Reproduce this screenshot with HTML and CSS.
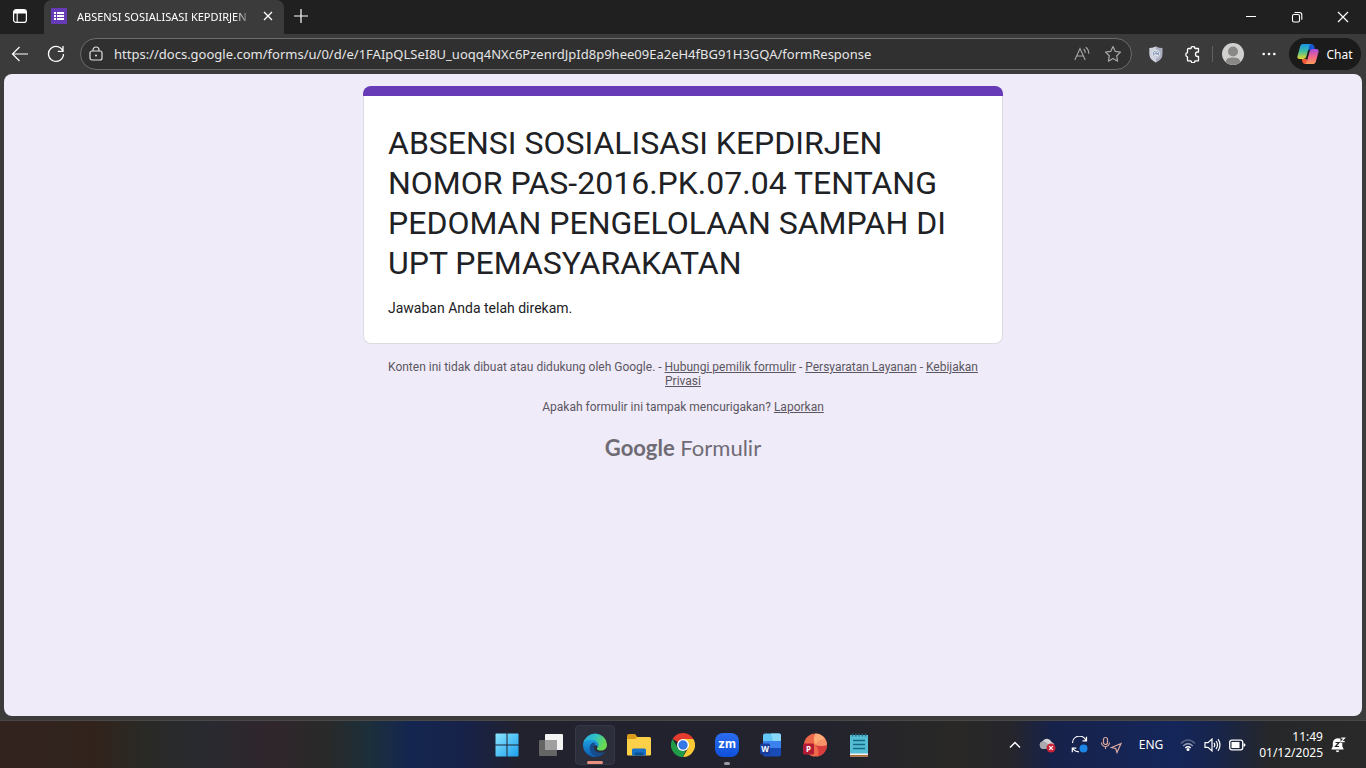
FILE: index.html
```html
<!DOCTYPE html>
<html lang="id">
<head>
    <meta charset="UTF-8">
    <meta name="viewport" content="width=device-width, initial-scale=1.0">
    <title>ABSENSI SOSIALISASI KEPDIRJEN</title>
    <link rel="stylesheet" href="styles.css">
</head>
<body>
    <!-- Tab strip -->
    <header class="tab-strip">
        <button class="tab-menu" aria-label="Tab actions">
            <svg width="16" height="16" viewBox="0 0 16 16"><rect x="1.6" y="1.6" width="12.8" height="12.8" rx="2.5" fill="none" stroke="#fff" stroke-width="1.2"/><path d="M2 3.5Q2 2 3.5 2h9Q14 2 14 3.5V5.5H2z" fill="#fff"/><path d="M5.2 5v9" stroke="#fff" stroke-width="1.1"/></svg>
        </button>
        <div class="tab">
            <svg width="16" height="16" viewBox="0 0 16 16"><rect width="16" height="16" rx="1" fill="#673ab7"/><g fill="#fff"><rect x="3" y="4" width="2" height="2"/><rect x="6" y="4" width="7" height="2"/><rect x="3" y="7" width="2" height="2"/><rect x="6" y="7" width="7" height="2"/><rect x="3" y="10" width="2" height="2"/><rect x="6" y="10" width="7" height="2"/></g></svg>
            <span class="tab-title">ABSENSI SOSIALISASI KEPDIRJEN</span>
            <button class="tab-close" aria-label="Close tab">
                <svg width="10" height="10" viewBox="0 0 10 10"><path d="M1 1l8 8M9 1L1 9" stroke="#fff" stroke-width="1.3"/></svg>
            </button>
        </div>
        <button class="new-tab" aria-label="New tab">
            <svg width="14" height="14" viewBox="0 0 14 14"><path d="M7 0v14M0 7h14" stroke="#fff" stroke-width="1.2"/></svg>
        </button>
        <div class="window-controls">
            <button aria-label="Minimize"><svg width="12" height="12" viewBox="0 0 12 12"><path d="M1 5.5h10" stroke="#fff"/></svg></button>
            <button aria-label="Restore"><svg width="12" height="12" viewBox="0 0 12 12" fill="none" stroke="#fff" stroke-width="1.1"><rect x="1.5" y="3.5" width="7" height="7.5" rx="1.5"/><path d="M3.5 1.5H8.5Q10.8 1.5 10.8 3.8V8.8"/></svg></button>
            <button aria-label="Close"><svg width="12" height="12" viewBox="0 0 12 12"><path d="M1 1l10 10M11 1L1 11" stroke="#fff" stroke-width="1.2"/></svg></button>
        </div>
    </header>

    <!-- Toolbar -->
    <nav class="toolbar">
        <button class="nav-btn" aria-label="Back">
            <svg width="18" height="16" viewBox="0 0 18 16" fill="none" stroke="#fff" stroke-width="1.2"><path d="M17 8H1.5M8.5 1L1.5 8l7 7"/></svg>
        </button>
        <button class="nav-btn" aria-label="Refresh">
            <svg width="18" height="18" viewBox="0 0 18 18" fill="none" stroke="#fff" stroke-width="1.3"><path d="M16 6.2A7.5 7.5 0 1 0 16.5 9M16 1v5.3h-5.2"/></svg>
        </button>
        <div class="address-bar">
            <svg width="14" height="16" viewBox="0 0 14 16" fill="none" stroke="#e0e0e0" stroke-width="1.2"><rect x="1" y="5" width="12" height="9" rx="2"/><path d="M4 5V4a3 3 0 0 1 6 0v1"/><circle cx="7" cy="9.5" r="1" fill="#e0e0e0" stroke="none"/></svg>
            <input class="address-input" type="text" aria-label="Address and search bar" value="https://docs.google.com/forms/u/0/d/e/1FAIpQLSeI8U_uoqq4NXc6PzenrdJpId8p9hee09Ea2eH4fBG91H3GQA/formResponse">
            <button aria-label="Read aloud"><svg width="16" height="16" viewBox="0 0 16 16" fill="none" stroke="#a8a8a8" stroke-width="1.1"><path d="M.8 14L6 2.5 11.200 14M2.700 10h6.600M9.600 3q1.700 1.300 1.600 4M11.800 1.200q3 2.200 3 6.500"/></svg></button>
            <button aria-label="Add to favorites"><svg width="18" height="18" viewBox="0 0 18 18"><path d="M9 1.5l2.3 4.9 5.2.7-3.800 3.700.9 5.400L9 13.600l-4.600 2.600.9-5.400L1.500 7.100l5.200-.7z" fill="none" stroke="#a8a8a8" stroke-width="1.2" stroke-linejoin="round"/></svg></button>
        </div>
        <button class="nav-btn" aria-label="Shield extension">
            <svg width="14" height="17" viewBox="0 0 14 17"><path d="M7 .5Q10 2 13.5 2v6Q13.5 13.5 7 16.5.5 13.5.5 8V2Q4 2 7 .5z" fill="#aab0c0"/><path d="M7 .5Q4 2 .5 2v6Q.5 13.500 7 16.500z" fill="#d0d3dc"/><circle cx="7" cy="7.800" r="3.600" fill="#8295b4" stroke="#e6e9f0" stroke-width="1"/><path d="M9 6.500Q5 5 5.500 7.500T9 9Q7 11 5 9.500" fill="none" stroke="#f4f5f8"/></svg>
        </button>
        <button class="nav-btn" aria-label="Extensions">
            <svg width="17" height="17" viewBox="0 0 17 17" fill="none" stroke="#fff" stroke-width="1.300" stroke-linejoin="round"><path d="M4.500 2.500H7a2 2 0 0 1 4 0h3.500V6h-.8a2 2 0 0 0 0 4.500h.8v4.300H11a2 2 0 0 1-4 0H3.500v-4a2.200 2.200 0 0 1 0-4.300v-3q0-1 1-1z"/></svg>
        </button>
        <span class="divider"></span>
        <button class="nav-btn" aria-label="Profile">
            <svg width="22" height="22" viewBox="0 0 22 22"><circle cx="11" cy="11" r="11" fill="#d2d0ce"/><circle cx="11" cy="8.500" r="5" fill="#8a8886"/><path d="M3.800 19.300Q3.500 14.500 11 14.500t7.200 4.800A11 11 0 0 1 3.800 19.300z" fill="#8a8886"/></svg>
        </button>
        <button class="nav-btn" aria-label="Settings and more">
            <svg width="14" height="4" viewBox="0 0 14 4" fill="#fff"><circle cx="1.700" cy="2" r="1.300"/><circle cx="7" cy="2" r="1.300"/><circle cx="12.300" cy="2" r="1.300"/></svg>
        </button>
        <button class="chat-btn">
            <svg width="22" height="20" viewBox="0 0 22 20">
                <defs>
                    <linearGradient id="cpA" x1="0" y1="0" x2="0" y2="1"><stop offset="0" stop-color="#1697ea"/><stop offset=".5" stop-color="#42bd9c"/><stop offset="1" stop-color="#e8d92b"/></linearGradient>
                    <linearGradient id="cpB" x1="0" y1="0" x2="0" y2="1"><stop offset="0" stop-color="#a34ee0"/><stop offset=".5" stop-color="#f2648b"/><stop offset="1" stop-color="#ff9b5a"/></linearGradient>
                </defs>
                <path d="M11 0h3.500q2 0 2.600 2l1.200 4H11z" fill="#1757cf"/>
                <path d="M5.800 0H14q-1.300.5-1.700 2L9.500 12q-.7 3-3.500 3H2.500Q-.3 15 .5 12L3.200 2.300Q3.800 0 5.800 0z" fill="url(#cpA)"/>
                <path d="M11 20H8Q6 20 5.500 18l-.8-3h5z" fill="#f05a38"/>
                <path d="M16.200 20H8q1.300-.5 1.700-2l2.800-10q.7-3 3.500-3h3.500q2.800 0 2 3l-2.700 9.700Q18.200 20 16.200 20z" fill="url(#cpB)"/>
            </svg>
            Chat
        </button>
    </nav>

    <main class="page">
        <section class="card">
            <div class="card-bar"></div>
            <div class="card-body">
                <h1>ABSENSI SOSIALISASI KEPDIRJEN NOMOR PAS-2016.PK.07.04 TENTANG PEDOMAN PENGELOLAAN SAMPAH DI UPT PEMASYARAKATAN</h1>
                <p>Jawaban Anda telah direkam.</p>
            </div>
        </section>
        <footer class="form-footer">
            <p>Konten ini tidak dibuat atau didukung oleh Google. - <a href="#">Hubungi pemilik formulir</a> - <a href="#">Persyaratan Layanan</a> - <a href="#">Kebijakan Privasi</a></p>
            <p>Apakah formulir ini tampak mencurigakan? <a href="#">Laporkan</a></p>
            <a class="logo" href="#"><span class="logo-google">Google</span> Formulir</a>
        </footer>
    </main>

    <!-- Taskbar -->
    <div class="taskbar">
        <div class="apps">
            <button class="app" aria-label="Start">
                <svg width="24" height="24" viewBox="0 0 24 24"><defs><linearGradient id="win" x1="0" y1="0" x2="1" y2="1"><stop offset="0" stop-color="#8be4fd"/><stop offset="1" stop-color="#1b9fee"/></linearGradient></defs><path d="M1 .5h10.500v11H.5V1zM12.500.5H23l.5.5v10.500h-11zM.5 12.500h11v11H1l-.5-.5zM12.500 12.500h11V23l-.5.500H12.500z" fill="url(#win)"/></svg>
            </button>
            <button class="app" aria-label="Task view">
                <svg width="24" height="24" viewBox="0 0 24 24"><rect x="6" y="1" width="18" height="16" rx="1" fill="#f3f3f3"/><rect x="0" y="7" width="18" height="16" rx="1" fill="#6d6d6d" fill-opacity=".9"/><path d="M6 7h12v10H6z" fill="#a0a0a0"/></svg>
            </button>
            <button class="app active" aria-label="Edge">
                <svg width="24" height="24" viewBox="0 0 24 24">
                    <defs>
                        <linearGradient id="edA" x1="0" y1="0" x2="1" y2=".4"><stop offset="0" stop-color="#27a8e0"/><stop offset=".5" stop-color="#2fc1c6"/><stop offset="1" stop-color="#6bdc4d"/></linearGradient>
                        <linearGradient id="edB" x1="0" y1="0" x2="0" y2="1"><stop offset="0" stop-color="#1f9fe4"/><stop offset="1" stop-color="#0c5cad"/></linearGradient>
                    </defs>
                    <path d="M.2 10.500A12 12 0 0 1 24 11.500c0 4-3 6-6 6-3.500 0-5-1.500-3.500-3C16 12.500 14 8 9 8Q3 8 .2 10.500z" fill="url(#edA)"/>
                    <path d="M0 12C0 8 4.500 6.500 8.500 6.800 13 7 15.500 9.500 15.500 12q0 1-.8 2C14 11.500 9 11.500 8.500 16c-.4 4 3 7 6 7.700A12 12 0 0 1 0 12z" fill="url(#edB)"/>
                    <path d="M10.500 9.500C7 10.500 6 14 7 17.500c1.200 4 4.500 6 7.500 6.200 3.500-.5 6-2.500 7.500-5-4 2-11 1-11-4.500 0-2.200 1.200-3 1.500-3.500z" fill="#154d8c"/>
                </svg>
            </button>
            <button class="app" aria-label="File Explorer">
                <svg width="24" height="24" viewBox="0 0 24 24"><path d="M0 3q0-2 2-2h6l2.500 3H22q2 0 2 2v16H0z" fill="#d99b1c"/><path d="M0 6h8l2.500-2H22q2 0 2 2v15q0 1.500-1.500 1.500h-21Q0 22.500 0 21z" fill="#fdd049"/><path d="M5 22.500V17q0-1.500 1.500-1.500h11Q19 15.500 19 17v5.500z" fill="#1771c7"/><path d="M7.500 22.500v-3h9v3z" fill="#0c5395"/></svg>
            </button>
            <button class="app" aria-label="Chrome">
                <svg width="24" height="24" viewBox="0 0 24 24"><path d="M12 12L1.600 6A12 12 0 0 1 22.400 6z" fill="#e33b2e"/><path d="M12 6h10.400A12 12 0 0 1 12 24l5.200-9z" fill="#fcc934"/><path d="M1.600 6l5.200 9q3 4 8 2.500L12 24A12 12 0 0 1 1.600 6z" fill="#229b49"/><circle cx="12" cy="12" r="6" fill="#fff"/><circle cx="12" cy="12" r="4.700" fill="#3478e5"/></svg>
            </button>
            <button class="app running" aria-label="Zoom"><span class="zoom-icon">zm</span></button>
            <button class="app" aria-label="Word">
                <svg width="22" height="24" viewBox="0 0 22 24"><path d="M3 2.500Q3 .5 5 .5h14q2 0 2 2V8H3z" fill="#62c6f7"/><path d="M11 .5h8q2 0 2 2V8h-8z" fill="#89d8fa"/><path d="M3 8h18v8H3z" fill="#3b82ee"/><path d="M3 15h18v6.500q0 2-2 2H5q-2 0-2-2z" fill="#184bb5"/><rect y="10.500" width="10" height="11" rx="1.500" fill="#193d9b"/><text x="5" y="19" class="office-letter">W</text></svg>
            </button>
            <button class="app" aria-label="PowerPoint">
                <svg width="24" height="24" viewBox="0 0 24 24"><circle cx="12.500" cy="12" r="11.500" fill="#ee684a"/><path d="M12.500.5Q20 1 22.500 7 17 6 12.500 12 9 6 12.500.5z" fill="#ffab76"/><path d="M24 12a11.500 11.500 0 0 1-9 11.200Q17 17 12.500 12 18 14 24 12z" fill="#d93c3c"/><path d="M12.500 12Q17 6 22.500 7 24 9 24 12 18 14 12.500 12z" fill="#f79368"/><rect y="10.500" width="11" height="11" rx="1.500" fill="#b31b35"/><text x="5.500" y="19" class="office-letter">P</text></svg>
            </button>
            <button class="app" aria-label="Notepad">
                <svg width="20" height="24" viewBox="0 0 20 24"><path d="M1 2h18v20H1z" fill="#55bed5"/><path d="M1 20.500h18v3H1z" fill="#f2f2f2"/><path d="M1 22h18v1.500H1z" fill="#b66e2c"/><path d="M3.500.5v3M6.800.5v3M10 .5v3M13.300.5v3M16.500.5v3" stroke="#246c86" stroke-width="1.300"/><path d="M4 7.500h12M4 11.500h12M4 15.500h12" stroke="#176983" stroke-width="1.500"/></svg>
            </button>
        </div>
        <div class="tray">
            <button aria-label="Show hidden icons"><svg width="12" height="8" viewBox="0 0 12 8"><path d="M1 6.500l5-5 5 5" fill="none" stroke="#fff" stroke-width="1.500"/></svg></button>
            <button aria-label="OneDrive"><svg width="17" height="16" viewBox="0 0 17 16"><path d="M4 12a4 4 0 0 1-.5-7.700A5 5 0 0 1 12.500 5 3.700 3.700 0 0 1 13 12z" fill="#d3d3d6"/><path d="M4 12a4 4 0 0 1-.5-7.700Q6 4 8 6l4 6z" fill="#a9a9ae"/><circle cx="12" cy="11" r="4.500" fill="#c92236"/><path d="M10.200 9.200l3.600 3.600M13.800 9.200l-3.600 3.600" stroke="#fff" stroke-width="1.200"/></svg></button>
            <button aria-label="Updates"><svg width="17" height="17" viewBox="0 0 17 17" fill="none" stroke="#fff" stroke-width="1.200"><path d="M1.500 7A7 7 0 0 1 15 4.500M15.500.8v4h-4M1.300 16.200v-4h4M1.800 12.500Q4 15.800 8 15.800"/><circle cx="12.500" cy="12.500" r="4" fill="#1b86e3" stroke="none"/></svg></button>
            <button aria-label="Microphone and location in use"><svg width="22" height="18" viewBox="0 0 22 18" fill="none" stroke="#dca89f" stroke-width="1.200"><rect x="3.500" y="1.500" width="4" height="7" rx="2"/><path d="M1.500 6.500a4 4 0 0 0 8 0M5.500 10.500V13M11.500 11.500L21 7.500l-4 9-1.300-4z"/></svg></button>
            <button class="lang">ENG</button>
            <button class="network" aria-label="Network, volume and battery">
                <svg width="16" height="14" viewBox="0 0 16 14" fill="none" stroke-width="1.500"><path d="M1 5.500q7-7 14 0" stroke="#5a6384"/><path d="M3.200 8q4.800-4.700 9.600 0" stroke="#929ab2"/><path d="M5.300 10q2.700-2.500 5.400 0" stroke="#fff"/><circle cx="8" cy="11.500" r="1.500" fill="#fff"/></svg>
                <svg width="17" height="16" viewBox="0 0 17 16" fill="none" stroke="#fff" stroke-width="1.200"><path d="M1 5.700h3L8 2v12l-4-3.700H1zM10 5.800q1.500 2.200 0 4.400M12 4q3 4 0 8M14 2.200q4 5.800 0 11.600"/></svg>
                <svg width="17" height="12" viewBox="0 0 17 12"><rect x=".7" y="1.200" width="13" height="9.600" rx="2" fill="none" stroke="#fff" stroke-width="1.300"/><path d="M2.500 3h8v6h-8zM14.500 4.200q2 0 2 1.800t-2 1.800z" fill="#fff"/></svg>
            </button>
            <button class="clock"><time>11:49</time><time>01/12/2025</time></button>
            <button aria-label="Notifications"><svg width="15" height="16" viewBox="0 0 15 16"><path d="M6.500 1.200a4.800 4.800 0 0 0-4.700 4.800v3.500L.5 11.800v.7h12v-.7l-1.200-2.300V1.800z" fill="#fff"/><path d="M4.800 13.500h3.500q-.3 1.800-1.750 1.800T4.800 13.500z" fill="#fff"/><path d="M4.500 5.500H8l-3.500 4H8" fill="none" stroke="#222" stroke-width="1.200"/><path d="M9.500 0H15v6H9.500z" fill="#292929"/><path d="M10.300 1.200h3.200l-3.200 3.500h3.400" fill="none" stroke="#fff" stroke-width="1.200"/></svg></button>
        </div>
    </div>
</body>
</html>
```
FILE: styles.css
```css
* {
    box-sizing: border-box;
}
body {
    display: flex;
    flex-direction: column;
    min-height: 100vh;
    margin: 0;
    background: #3b3b3b;
    font-family: "Segoe UI", "Noto Sans", sans-serif;
    font-size: 12px;
    color: #fff;
}
button {
    display: flex;
    align-items: center;
    justify-content: center;
    margin: 0;
    padding: 0;
    border: 0;
    background: none;
    color: inherit;
    font: inherit;
}
svg {
    display: block;
    flex: none;
}

/* Tab strip */
.tab-strip {
    display: flex;
    height: 34px;
    background: #202020;
}
.tab-menu {
    width: 40px;
    height: 32px;
}
.tab {
    display: flex;
    align-items: center;
    gap: 10px;
    width: 240px;
    margin-left: 4px;
    padding: 0 11px 2px 7px;
    border-radius: 8px 8px 0 0;
    background: #3b3b3b;
}
.tab-title {
    flex: 1;
    font-size: 11px;
    white-space: nowrap;
    -webkit-mask-image: linear-gradient(to right, #000 90%, transparent);
    mask-image: linear-gradient(to right, #000 90%, transparent);
}
.new-tab {
    width: 34px;
    height: 32px;
}
.window-controls {
    display: flex;
    margin-left: auto;
}
.window-controls button {
    width: 46px;
}

/* Toolbar */
.toolbar {
    display: flex;
    align-items: center;
    height: 40px;
    padding: 0 5px 0 2px;
}
.nav-btn {
    width: 36px;
    height: 32px;
}
.address-bar {
    display: flex;
    flex: 1;
    align-items: center;
    gap: 14px;
    height: 32px;
    margin: 0 6px;
    padding: 0 9px 0 8px;
    border: 1px solid #6c6c6c;
    border-radius: 16px;
    background: #303030;
}
.address-input {
    flex: 1;
    min-width: 0;
    margin-left: -3px;
    padding: 0;
    border: 0;
    outline: 0;
    background: none;
    color: #e6e6e6;
    font: 13px "Segoe UI", "Noto Sans", sans-serif;
}
.divider {
    width: 1px;
    height: 16px;
    margin: 0 2px;
    background: #606060;
}
.chat-btn {
    gap: 7px;
    width: 72px;
    height: 32px;
    margin-left: 2px;
    border-radius: 16px;
    background: #1b1b1b;
}

/* Form page */
.page {
    flex: 1;
    margin: 0 4px 4px;
    padding: 12px 0;
    border-radius: 8px;
    background: #f0ebf8;
    font-family: Roboto, sans-serif;
}
.card {
    max-width: 640px;
    margin: 0 auto;
    color: #202124;
}
.card-bar {
    height: 10px;
    border-radius: 8px 8px 0 0;
    background: #673ab7;
}
.card-body {
    padding: 27px 24px 25px;
    border: 1px solid #dadce0;
    border-top: 0;
    border-radius: 0 0 8px 8px;
    background: #fff;
}
.card h1 {
    margin: 0;
    font-size: 32px;
    font-weight: 400;
    line-height: 40px;
}
.card p {
    margin: 15px 0 0;
    font-size: 14px;
    line-height: 20px;
}
.form-footer {
    max-width: 640px;
    margin: 16px auto 0;
    padding: 0 24px;
    color: #5b5762;
    line-height: 14px;
    text-align: center;
}
.form-footer p {
    margin: 0 0 12px;
}
.form-footer a {
    color: inherit;
}
.form-footer .logo {
    display: block;
    margin-top: 20px;
    color: #6e6b74;
    font-family: Lato, sans-serif;
    font-size: 22px;
    line-height: 28px;
    text-decoration: none;
}
.logo-google {
    font-weight: 700;
}

/* Taskbar */
.taskbar {
    display: grid;
    grid-template-columns: 1fr auto 1fr;
    align-items: center;
    height: 48px;
    border-top: 1px solid #484848;
    background: linear-gradient(to right, #32231f 0%, #31231c 7%, #292a27 11%, #292a30 15%, #30262c 20%, #292a29 24%, #1c2f3b 27%, #142650 30%, #172249 34%, #22222f 38%, #22232d 60%, #292826 70%, #25252b 74%, #17224a 77%, #14265a 86%, #17244b 89%, #262729 93%, #292929 100%);
}
.apps {
    display: flex;
    grid-column: 2;
    gap: 4px;
}
.app {
    position: relative;
    width: 40px;
    height: 40px;
    border-radius: 4px;
}
.app.active {
    border: 1px solid #373846;
    background: #2d2e3c;
}
.app.active::after,
.app.running::after {
    content: "";
    position: absolute;
    bottom: 0;
    width: 16px;
    height: 3px;
    border-radius: 2px;
    background: #e9917e;
}
.app.running::after {
    width: 6px;
    background: #9a9aa0;
}
.zoom-icon {
    width: 24px;
    height: 24px;
    border-radius: 8px;
    background: linear-gradient(#2b6cf0, #0f50dc);
    font: 700 12px/22px Inter, sans-serif;
}
.office-letter {
    fill: #fff;
    font: 700 8px "Noto Sans", sans-serif;
    text-anchor: middle;
}
.tray {
    display: flex;
    align-items: center;
    justify-content: flex-end;
    padding-right: 20px;
}
.tray > button {
    width: 32px;
    height: 40px;
}
.tray .lang {
    width: 48px;
}
.tray .network {
    gap: 8px;
    width: 76px;
}
.tray .clock {
    flex-direction: column;
    align-items: flex-end;
    width: 72px;
    line-height: 16px;
}
.tray > button:last-child {
    width: 16px;
    margin-left: 7px;
}
```
